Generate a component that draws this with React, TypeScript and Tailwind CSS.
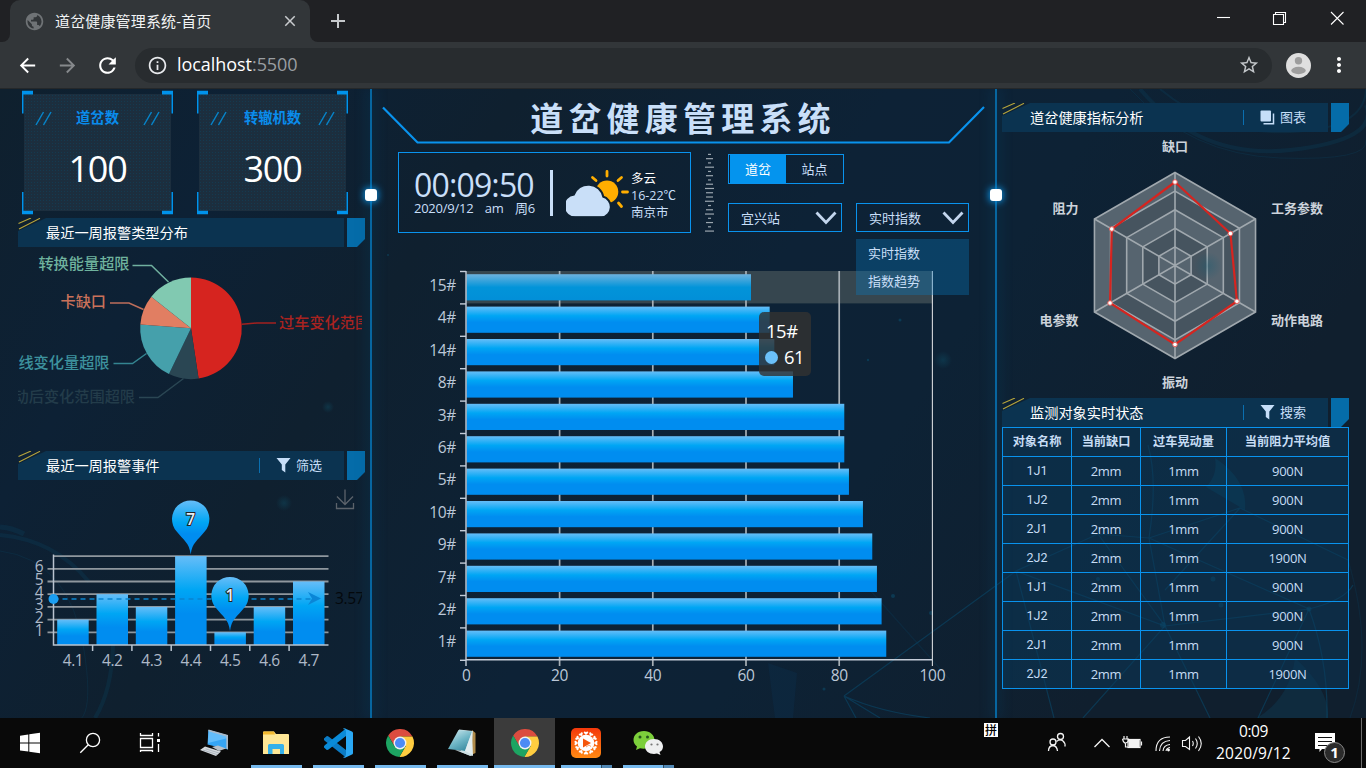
import React from "react";
import {
  MdAdd,
  MdArrowBack,
  MdArrowForward,
  MdClose,
  MdInfoOutline,
  MdMoreVert,
  MdPublic,
  MdRefresh,
  MdStarBorder,
} from "react-icons/md";

const FONT = "font-['Open_Sans','Noto_Sans_CJK_SC',sans-serif]";

/* ---------- browser chrome ---------- */

function TabStrip() {
  return (
    <div className="flex h-[42px] shrink-0 bg-[#202124]">
      <div className="flex w-[10px] items-end bg-[#323639]">
        <div className="h-full w-full rounded-br-[8px] bg-[#202124]" />
      </div>
      <div className="flex w-[300px] items-center rounded-t-[10px] bg-[#323639] pl-[14px] pr-[11px]">
        <MdPublic className="size-[21px] shrink-0 text-[#6f7376]" />
        <span className="ml-[10px] flex-1 whitespace-nowrap text-[15px] tracking-[0.15px] text-[#f1f3f4]">道岔健康管理系统-首页</span>
        <MdClose className="size-[18px] text-[#c9cccf]" />
      </div>
      <div className="w-[10px] bg-[#323639]">
        <div className="h-full w-full rounded-bl-[8px] bg-[#202124]" />
      </div>
      <div className="flex w-[35px] items-center justify-center">
        <MdAdd className="size-[24px] text-[#c6c9cc]" />
      </div>
      <div className="flex-1" />
      <svg className="mr-[20px] h-[42px] w-[130px]" viewBox="1216 0 130 42" fill="none" stroke="#fff" strokeWidth="1.1">
        <path d="M1217 17.5H1230" />
        <path d="M1273.5 14.5H1283.5V24.500H1273.500ZM1275.500 14.500V12.500H1285.500V22.500H1283.500" />
        <path d="M1331 12L1343.500 24.500M1343.500 12L1331 24.500" />
      </svg>
    </div>
  );
}

function Toolbar() {
  return (
    <div className="flex h-[47px] shrink-0 items-center border-b border-[#25282a] bg-[#323639]">
      <div className="flex w-[135px] items-center pl-[16px] text-white">
        <MdArrowBack className="size-[23px]" />
        <MdArrowForward className="ml-[17px] size-[23px] text-[#86898c]" />
        <MdRefresh className="ml-[16px] size-[25px]" />
      </div>
      <div className="flex h-[35px] w-[1137px] items-center rounded-full bg-[#282c2f] pl-[12px] pr-[12px]">
        <MdInfoOutline className="size-[21px] text-[#e8eaed]" />
        <span className="mb-[2px] ml-[9px] flex-1 text-[18px] leading-[33px] tracking-[-0.050px] text-white">
          localhost<span className="text-[#9a9ea2]">:5500</span>
        </span>
        <MdStarBorder className="size-[22px] text-[#c3c7ca]" />
      </div>
      <svg className="ml-[14px] size-[25px]" viewBox="0 0 25 25">
        <circle cx="12.500" cy="12.500" r="12.500" fill="#dfdfdf" />
        <circle cx="12.500" cy="7.700" r="3.700" fill="#9e9e9e" />
        <ellipse cx="12.500" cy="17.500" rx="7.200" ry="3.700" fill="#9e9e9e" />
      </svg>
      <MdMoreVert className="ml-[16px] size-[24px] text-white" />
    </div>
  );
}

/* ---------- shared dashboard pieces ---------- */

function Backdrop() {
  return (
    <svg className="absolute inset-0 h-full w-full" viewBox="0 89 1366 629" fill="none">
      <defs>
        <linearGradient id="bg" x1="0" y1="0" x2="1" y2="0.300">
          <stop offset="0" stopColor="#0f202e" />
          <stop offset="0.180" stopColor="#0d2135" />
          <stop offset="0.350" stopColor="#0f202f" />
          <stop offset="0.600" stopColor="#0d2236" />
          <stop offset="0.750" stopColor="#0d2235" />
          <stop offset="1" stopColor="#101f2e" />
        </linearGradient>
        <radialGradient id="star">
          <stop offset="0" stopColor="#0f5a72" stopOpacity="0.350" />
          <stop offset="1" stopColor="#0f5a72" stopOpacity="0" />
        </radialGradient>
      </defs>
      <rect y="89" width="1366" height="629" fill="url(#bg)" />
      <g stroke="#0a4a6e" strokeOpacity="0.550" strokeWidth="1.200">
        <path d="M844 696L1016 571L1098 534L1149 538L1165 626L1016 571M1098 534L1165 626L1083 718M1016 571L1054 718M844 696L880 718M844 696Q880 712 930 718M844 696L856 718M1149 538L1240 508L1348 560M1149 538L1309 609L1165 626L1210 718M1309 609Q1345 600 1353 585M1309 609L1258 718M1309 609Q1328 660 1327 718M1240 508L1165 590M1148 445Q1158 480 1149 538" />
        <path d="M1348 560Q1375 650 1350 718M870 590L950 680" strokeOpacity="0.200" />
      </g>
      <g fill="#0b5e82" fillOpacity="0.400">
        <circle cx="1163" cy="625" r="3" />
        <circle cx="1213" cy="579" r="2.500" />
        <circle cx="1309" cy="609" r="2.500" />
        <circle cx="1221" cy="605" r="2.500" />
        <circle cx="1098" cy="579" r="2" />
        <circle cx="893" cy="596" r="2" />
        <circle cx="931" cy="613" r="2" />
        <circle cx="880" cy="646" r="1.500" />
        <circle cx="824" cy="689" r="1.500" />
        <circle cx="388" cy="255" r="1" />
        <circle cx="868" cy="360" r="1.200" />
        <circle cx="900" cy="320" r="1.500" />
      </g>
      <path d="M768 663L797 673L793 718H775Z" fill="#0b3050" fillOpacity="0.350" />
      <path d="M1215 458Q1248 480 1245 510L1206 487Q1218 475 1215 458Z" fill="#0a5070" fillOpacity="0.350" />
      <path d="M1295 658Q1330 690 1328 718H1257Q1290 698 1295 658Z" fill="#0a5070" fillOpacity="0.250" />
      <circle cx="943" cy="360" r="9" fill="url(#star)" />
      <circle cx="284" cy="503" r="8" fill="url(#star)" />
      <circle cx="328" cy="407" r="6" fill="url(#star)" />
      <g stroke="#0b4460" strokeOpacity="0.280">
        <path d="M0 527Q13 528 24 534" strokeWidth="5" />
        <path d="M0 535Q55 540 89 582M113 645Q112 690 95 718" strokeWidth="4" />
        <path d="M0 551Q70 560 84 650T60 718" strokeWidth="1" />
        <path d="M1140 89Q1200 160 1290 150T1366 105" strokeWidth="4" />
        <path d="M1160 89Q1215 135 1290 132T1366 89" strokeWidth="2" />
        <path d="M1130 89Q1190 155 1280 158T1366 140" strokeWidth="1" />
      </g>
    </svg>
  );
}

function PanelHeader({ title, action }: { title: string; action?: React.ReactNode }) {
  return (
    <div className="relative flex h-[29px] w-[347px] shrink-0 justify-between">
      <div className="flex w-[326px] items-center bg-[#0b3350] pl-[28px] [clip-path:polygon(28px_0,100%_0,100%_100%,0_100%,0_13px)]">
        <h2 className="flex-1 text-[14.2px] leading-[28px] text-white">{title}</h2>
        {action && (
          <div className="flex h-[15px] w-[85px] items-center border-l border-[#0a6fb0] pl-[16px] text-[13px] text-[#c6def8]">{action}</div>
        )}
      </div>
      <div className="w-[18px] bg-[#056ca9] [clip-path:polygon(0_0,100%_0,100%_21px,10px_100%,0_100%)]" />
      <svg className="absolute left-0 top-0 h-[12px] w-[24px]" viewBox="0 0 24 12" stroke="#b7a53c" strokeWidth="1.100">
        <path d="M0.500 5.500L13 0M1 11L22 0.300" />
      </svg>
    </div>
  );
}

function Funnel() {
  return (
    <svg className="mr-[5px] h-[15px] w-[15px]" viewBox="0 0 15 15" fill="#c6def8">
      <path d="M0.500 0H14.500L9.300 6.500V14.500L5.800 12V6.500Z" />
    </svg>
  );
}

function CopyIcon() {
  return (
    <svg className="mr-[5px] h-[15px] w-[15px]" viewBox="0 0 15 15">
      <rect x="0.500" y="0.500" width="10.500" height="11" rx="1" fill="#c6def8" />
      <path d="M13.500 3.500V13.800H3.500" fill="none" stroke="#c6def8" strokeWidth="1.500" />
    </svg>
  );
}

function Divider() {
  return (
    <div className="relative w-[2px] shrink-0 bg-[#0766a0] shadow-[0_0_14px_2px_rgba(8,90,140,0.300)]">
      <div className="absolute -left-[5px] top-[100px] size-[12px] rounded-[3px] bg-white shadow-[0_0_7px_1px_#0a8fe0]" />
    </div>
  );
}

/* ---------- left column ---------- */

function StatCard({ label, value }: { label: string; value: string }) {
  return (
    <div className="relative h-[125px] w-[151px] px-[2px] py-[4px]">
      <div className="flex h-[117px] flex-col items-center bg-[#1c2e3e] bg-[radial-gradient(#143a50_0.8px,transparent_1px)] bg-[size:3px_3px]">
        <div className="mt-[14px] flex w-[125px] items-center justify-between">
          <Slashes />
          <span className="text-[14.300px] font-bold leading-[20px] text-[#0a8cec]">{label}</span>
          <Slashes />
        </div>
        <span className="mt-[18px] text-[36px] leading-[46px] tracking-[-1.300px] text-white">{value}</span>
      </div>
      <svg className="absolute inset-0 h-full w-full" viewBox="0 0 151 125" fill="#0093ec">
        <path d="M0 0.800H11V4.500H1.500V23.500H0ZM151 0.800H140V4.500H149.500V23.500H151ZM0 124.300H11V120.800H1.500V102H0ZM151 124.300H140V120.800H149.500V102H151Z" />
      </svg>
    </div>
  );
}

function Slashes() {
  return (
    <svg className="h-[15px] w-[17px]" viewBox="0 0 17 15" stroke="#0783c8" strokeWidth="1.500">
      <path d="M1 14L8.500 1M8.500 14L16 1" />
    </svg>
  );
}

const pie = [
  { v: 10, c: "#d6241f" },
  { v: 2, c: "#2a4653" },
  { v: 4, c: "#45a0ab" },
  { v: 2, c: "#e17e62" },
  { v: 3, c: "#81c9b1" },
];

function PieChart() {
  const total = pie.reduce((s, p) => s + p.v, 0);
  const at = (a: number) => `${191 + 50.800 * Math.sin(a)} ${328.300 - 50.800 * Math.cos(a)}`;
  let start = 0;
  return (
    <svg className="h-[204px] w-[344px] shrink-0" viewBox="18 247 344 204" fontSize="15.200" fontWeight="500">
      {pie.map((p) => {
        const end = start + (p.v / total) * Math.PI * 2;
        const d = `M191 328.300L${at(start)}A50.800 50.800 0 0 1 ${at(end)}Z`;
        start = end;
        return <path key={d} d={d} fill={p.c} />;
      })}
      <g fill="none" strokeWidth="1.500">
        <path d="M242 324.300L257 323H276" stroke="#a3211f" />
        <path d="M183.500 378.500L158 397.500H139" stroke="#2a4653" />
        <path d="M146.500 353.500L132.500 363.500H113.500" stroke="#348591" />
        <path d="M143.500 309.500L129 303H110" stroke="#bd6e5b" />
        <path d="M168.500 282L151.500 265.500H132.500" stroke="#70b09f" />
      </g>
      <text x="279" y="327.600" fill="#a92320">过车变化范围超限</text>
      <text x="135" y="401.800" fill="#233c4a" textAnchor="end">启动后变化范围超限</text>
      <text x="109.500" y="367.500" fill="#3d929e" textAnchor="end">曲线变化量超限</text>
      <text x="106" y="307.300" fill="#c9715a" textAnchor="end">卡缺口</text>
      <text x="129.500" y="269" fill="#6fb39e" textAnchor="end">转换能量超限</text>
    </svg>
  );
}

const weekly = [2, 4, 3, 7, 1, 3, 5];

function Pin({ x, y, label }: { x: number; y: number; label: string }) {
  return (
    <g transform={`translate(${x} ${y})`}>
      <path d="M0 36C-1.500 24-7 22-14 13A18.700 18.700 0 1 1 14 13C7 22 1.500 24 0 36Z" fill="url(#pin)" />
      <text x="0" y="6" textAnchor="middle" fontSize="15.500" fontWeight="600" fill="#e8eef5" stroke="#222" strokeWidth="2" paintOrder="stroke">
        {label}
      </text>
    </g>
  );
}

function WeeklyChart() {
  return (
    <svg className="h-[225px] w-[344px] shrink-0" viewBox="18 480 344 225" fontSize="15.500" fontWeight="500">
      <defs>
        <linearGradient id="barY" x1="0" y1="0" x2="0" y2="1">
          <stop offset="0" stopColor="#66bdf8" />
          <stop offset="0.380" stopColor="#00a6f4" />
          <stop offset="0.650" stopColor="#008df0" />
        </linearGradient>
        <linearGradient id="pin" x1="0" y1="0" x2="0" y2="1">
          <stop offset="0" stopColor="#66bdf8" />
          <stop offset="0.400" stopColor="#00a6f4" />
          <stop offset="0.620" stopColor="#008df0" />
        </linearGradient>
      </defs>
      <g stroke="#8f979e" strokeWidth="1.800">
        {[1, 2, 3, 4, 5, 6, 7].map((n) => (
          <path key={n} d={`M${n === 7 ? 53 : 47.500} ${645 - n * 12.700}H328.500`} />
        ))}
      </g>
      {weekly.map((v, i) => (
        <rect key={i} x={57.200 + i * 39.300} y={645 - v * 12.700} width="31.500" height={v * 12.700} fill="url(#barY)" />
      ))}
      <g stroke="#b9c3d0" strokeWidth="1.500">
        <path d="M53.500 554.500V645H328.500" fill="none" />
        {[1, 2, 3, 4, 5, 6].map((n) => (
          <path key={n} d={`M${53.300 + n * 39.300} 645V651`} />
        ))}
      </g>
      <path d="M53.500 599H318" stroke="#0a84cf" strokeWidth="1.500" strokeDasharray="5 4" />
      <circle cx="53.500" cy="599" r="5" fill="#1b9ff2" />
      <path d="M321 598.500L308 592L312 598.500L308 605Z" fill="#0a86d6" />
      <text x="335" y="603.500" fill="#04080c" letterSpacing="-0.400">3.57</text>
      <g fill="#aeb9c8">
        {[1, 2, 3, 4, 5, 6].map((n) => (
          <text key={n} x="43.500" y={648.500 - n * 12.700} textAnchor="end">{n}</text>
        ))}
        {weekly.map((_, i) => (
          <text key={i} x={73 + i * 39.300} y="666" textAnchor="middle" letterSpacing="-0.400">{`4.${i + 1}`}</text>
        ))}
      </g>
      <Pin x={190.700} y={518.500} label="7" />
      <Pin x={230} y={595} label="1" />
      <path d="M345 489.500V504M337 496.500L345 504.500L353 496.500M336.500 503V508.500H353.500V503" fill="none" stroke="#5c636b" strokeWidth="1.300" />
    </svg>
  );
}

/* ---------- centre column ---------- */

function Weather() {
  return (
    <svg className="ml-[13px] h-[48px] w-[64px]" viewBox="566 169 64 48">
      <g stroke="#ffae00" strokeWidth="2.800" strokeLinecap="round">
        <path d="M607 171.500V176M592.500 177.500L596 180.500M618 180.500L621.500 177.500M622.500 192H627.500M618.500 203L621.500 206.500" />
      </g>
      <circle cx="607" cy="191.800" r="11.300" fill="#ffae00" />
      <path
        d="M576 216.500A10.500 10.500 0 0 1 574.500 195.500A14.500 14.500 0 0 1 602.500 197.500A9.700 9.700 0 0 1 601.500 216.500Z"
        fill="#c9dff8"
        stroke="#0f2131"
        strokeWidth="4"
        paintOrder="stroke"
      />
      <rect x="564" y="216.300" width="50" height="4" fill="#0f2131" />
    </svg>
  );
}

const ticks = [3, 7, 3, 9, 3, 7, 3, 7, 9, 7, 7, 9, 3, 7, 9, 3, 7, 3, 9];

function Ruler() {
  return (
    <svg className="ml-[14px] h-[81px] w-[9px]" viewBox="0 0 9 81" fill="#9ba6af">
      {ticks.map((w, i) => (
        <rect key={i} x={(9 - w) / 2} y={1.800 + i * 4.260} width={w} height="1.200" />
      ))}
    </svg>
  );
}

function Select({ label, width, children }: { label: string; width: string; children?: React.ReactNode }) {
  return (
    <div className={`relative flex h-[29px] items-center justify-between border border-[#0993ee] pl-[12px] pr-[4px] text-[13px] text-[#c9dff8] ${width}`}>
      <span className="pt-px leading-[20px]">{label}</span>
      <svg className="h-[14px] w-[22px]" viewBox="0 0 22 14" fill="none" stroke="#c3d6ee" strokeWidth="2.800">
        <path d="M1.500 1.500L11 11.500L20.500 1.500" />
      </svg>
      {children}
    </div>
  );
}

const ranking: [string, number][] = [
  ["15#", 61],
  ["4#", 65],
  ["14#", 66],
  ["8#", 70],
  ["3#", 81],
  ["6#", 81],
  ["5#", 82],
  ["10#", 85],
  ["9#", 87],
  ["7#", 88],
  ["2#", 89],
  ["1#", 90],
];

function RankingChart() {
  const row = 32.400;
  return (
    <div className="relative h-[485px]">
      <svg className="h-[485px] w-[623px]" viewBox="372 233 623 485" fontSize="15.500" fontWeight="500">
        <defs>
          <linearGradient id="barX" x1="0" y1="0" x2="0" y2="1">
            <stop offset="0" stopColor="#66bdf8" />
            <stop offset="0.350" stopColor="#00a6f4" />
            <stop offset="0.600" stopColor="#008df0" />
          </linearGradient>
          <linearGradient id="barHover" x1="0" y1="0" x2="0" y2="1">
            <stop offset="0" stopColor="#6db2de" />
            <stop offset="0.500" stopColor="#0294d9" />
            <stop offset="1" stopColor="#028fd8" />
          </linearGradient>
        </defs>
        <rect x="466" y="271" width="466.500" height="32.400" fill="#36464f" />
        {[20, 40, 60, 80, 100].map((v) => (
          <path key={v} d={`M${466.400 + v * 4.660} 271V666`} stroke={v === 100 ? "#d5d8dc" : "#a7afb5"} strokeWidth={v === 100 ? 1.100 : 1.700} />
        ))}
        {ranking.map(([name, v], i) => (
          <g key={name}>
            <rect x="466.500" y={274.200 + i * row} width={v * 4.664} height="26.200" fill={i === 0 ? "url(#barHover)" : "url(#barX)"} />
            <text x="456" y={291 + i * row} textAnchor="end" fill="#bcc8d8" letterSpacing="-0.300">{name}</text>
          </g>
        ))}
        <g stroke="#c4ccd8" strokeWidth="1.400">
          <path d="M466 271V666M466 659.800H932.500" />
          {Array.from({ length: 13 }, (_, i) => (
            <path key={i} d={`M460 ${271.500 + i * row}H466`} />
          ))}
        </g>
        <g fill="#bcc8d8">
          {[0, 20, 40, 60, 80, 100].map((v) => (
            <text key={v} x={466.400 + v * 4.660} y="681.300" textAnchor="middle" letterSpacing="-0.300">{v}</text>
          ))}
        </g>
      </svg>
      <div className="absolute left-[387px] top-[79px] flex h-[64px] w-[52px] flex-col rounded-[5px] bg-[#323232]/[0.820] pl-[7px] pt-[6px] text-[18.400px] leading-[26px] tracking-[-0.400px] text-white">
        <span>15#</span>
        <span className="flex items-center">
          <i className="-ml-px mr-[6px] size-[13px] rounded-full bg-[#6bc0f9]" />61
        </span>
      </div>
    </div>
  );
}

function Center() {
  return (
    <main className="flex w-[623px] shrink-0 flex-col">
      <header className="relative flex h-[63px] justify-center">
        <svg className="absolute inset-0 h-full w-full" viewBox="372 89 623 63" fill="none" stroke="#0993ee" strokeWidth="2.200">
          <path d="M383 107.500L417.500 142.500H949L984 107" />
        </svg>
        <h1 className="-ml-px text-[33px] font-bold leading-[60px] tracking-[5.200px] text-[#c9dff8]">道岔健康管理系统</h1>
      </header>
      <section className="relative z-10 flex h-[81px] pl-[26px]">
        <div className="flex h-[81px] w-[293px] items-center border border-[#0993ee] text-[#c9dff8]">
          <div className="ml-[15px] w-[122px]">
            <div className="text-[32px] leading-[32px] tracking-[-0.850px]">00:09:50</div>
            <div className="-mt-px flex w-[121px] justify-between text-[13px] leading-[16px] tracking-[-0.250px]">
              <span>2020/9/12</span>
              <span>am</span>
              <span>周6</span>
            </div>
          </div>
          <div className="ml-[14px] h-[46px] w-[3px] bg-[#c9dff8]" />
          <Weather />
          <div className="ml-px mt-[6px] whitespace-nowrap text-[12.500px] leading-[17px]">
            <div className="text-white">多云</div>
            <div>16-22℃</div>
            <div>南京市</div>
          </div>
        </div>
        <Ruler />
        <div className="ml-[14px] flex flex-col pt-[2px]">
          <div className="flex h-[30px] w-[116px] border border-[#0993ee] pl-px text-[13px] leading-[28px]">
            <span className="w-[56px] bg-[#0494ee] text-center text-white">道岔</span>
            <span className="flex-1 text-center text-[#c9dff8]">站点</span>
          </div>
          <div className="mt-[19px] flex gap-[14px]">
            <Select label="宜兴站" width="w-[114px]" />
            <Select label="实时指数" width="w-[113px]">
              <ul className="absolute -left-px top-[35px] h-[56px] w-[113px] bg-[#087cc0]/[0.340] pl-[12px] leading-[28px]">
                <li>实时指数</li>
                <li>指数趋势</li>
              </ul>
            </Select>
          </div>
        </div>
      </section>
      <RankingChart />
    </main>
  );
}

/* ---------- right column ---------- */

const CX = 1175;
const CY = 265.500;
const ring = (radii: number[]) =>
  radii
    .map((r, i) => {
      const a = (i * Math.PI) / 3;
      return `${CX + r * Math.sin(a)},${CY - r * Math.cos(a)}`;
    })
    .join(" ");
const health = [83.500, 64, 71.500, 79, 75, 73];

function Radar() {
  return (
    <svg className="h-[266px] w-[369px] shrink-0" viewBox="997 132 369 266" fontSize="13" fontWeight="600" fill="#ccd3db">
      {[5, 4, 3, 2, 1].map((n) => (
        <polygon
          key={n}
          points={ring(Array(6).fill(n * 18.600))}
          fill={n % 2 ? "#56646f" : "#46545f"}
          stroke="#a0a8ae"
          strokeWidth="1.600"
        />
      ))}
      <circle cx="1208" cy="266" r="14" fill="url(#star)" />
      <path d="M1175 172.500V358.500M1094.500 219L1255.500 312M1255.500 219L1094.500 312" stroke="#a0a8ae" strokeWidth="1.600" />
      <polygon points={ring(health)} fill="none" stroke="#d6241f" strokeWidth="2.200" />
      {ring(health)
        .split(" ")
        .map((p) => {
          const [x, y] = p.split(",");
          return <circle key={p} cx={x} cy={y} r="2.300" fill="#fff" stroke="#e8605c" strokeWidth="1" />;
        })}
      <text x="1175" y="150.500" textAnchor="middle">缺口</text>
      <text x="1175" y="386.500" textAnchor="middle">振动</text>
      <text x="1271" y="213">工务参数</text>
      <text x="1271" y="324.500">动作电路</text>
      <text x="1078.500" y="213" textAnchor="end">阻力</text>
      <text x="1078.500" y="324.500" textAnchor="end">电参数</text>
    </svg>
  );
}

const objects = ["1J1", "1J2", "2J1", "2J2", "1J1", "1J2", "2J1", "2J2"];

function StatusTable() {
  return (
    <table className="h-[262px] w-[347px] table-fixed border-collapse bg-[#0a3a5c]/50 text-center text-[13px] leading-[20px] text-[#c6dcf4]">
      <colgroup>
        <col className="w-[69px]" />
        <col className="w-[69px]" />
        <col className="w-[86px]" />
        <col className="w-[122px]" />
      </colgroup>
      <thead>
        <tr className="h-[29px] text-[12.200px]">
          {["对象名称", "当前缺口", "过车晃动量", "当前阻力平均值"].map((h) => (
            <th key={h} className="whitespace-nowrap border border-[#0993ee] p-0 font-bold">{h}</th>
          ))}
        </tr>
      </thead>
      <tbody>
        {objects.map((name, i) => (
          <tr key={i} className="h-[29px]">
            <td className="border border-[#0993ee] p-0 font-[Roboto,sans-serif] text-[12.500px]">{name}</td>
            {["2mm", "1mm", name === "2J2" ? "1900N" : "900N"].map((c) => (
              <td key={c} className="border border-[#0993ee] p-0 tracking-[-0.300px]">{c}</td>
            ))}
          </tr>
        ))}
      </tbody>
    </table>
  );
}

function Dashboard() {
  return (
    <div className="relative h-[629px] shrink-0 overflow-hidden bg-[#0f2131]">
      <Backdrop />
      <div className="relative flex h-full">
        <aside className="flex w-[370px] shrink-0 flex-col pl-[18px]">
          <div className="flex gap-[24px] pb-[3px] pl-[4px] pt-px">
            <StatCard label="道岔数" value="100" />
            <StatCard label="转辙机数" value="300" />
          </div>
          <PanelHeader title="最近一周报警类型分布" />
          <PieChart />
          <PanelHeader title="最近一周报警事件" action={<><Funnel />筛选</>} />
          <WeeklyChart />
        </aside>
        <Divider />
        <Center />
        <Divider />
        <aside className="flex w-[369px] shrink-0 flex-col">
          <div className="pl-[5px] pt-[14px]">
            <PanelHeader title="道岔健康指标分析" action={<><CopyIcon />图表</>} />
          </div>
          <Radar />
          <div className="pl-[5px]">
            <PanelHeader title="监测对象实时状态" action={<><Funnel />搜索</>} />
            <StatusTable />
          </div>
        </aside>
      </div>
    </div>
  );
}

/* ---------- task bar ---------- */

function ChromeLogo() {
  return (
    <svg className="size-[28px]" viewBox="0 0 48 48">
      <path d="M3.800 11.030A24 24 0 0 1 45.330 13H24L14.470 29.500Z" fill="#db4c3f" />
      <path d="M45.330 13A24 24 0 0 1 22.860 47.970L33.530 29.500L24 13Z" fill="#ffcd40" />
      <path d="M22.860 47.970A24 24 0 0 1 3.800 11.030L14.470 29.500H33.530Z" fill="#1da462" />
      <circle cx="24" cy="24" r="11" fill="#f2f2f2" />
      <circle cx="24" cy="24" r="8.700" fill="#4c8bf5" />
    </svg>
  );
}

function ComputerIcon() {
  return (
    <svg className="size-[30px]" viewBox="199 728 30 30">
      <path d="M208.500 730L228 735.500V749.500L207.500 744.500Z" fill="#35a5f5" />
      <path d="M208.500 730L228 735.500V738L208 743Z" fill="#63bdfb" />
      <path d="M208.500 729.500L228 735V749.500L226.300 748.500V736.500L208.500 731.300Z" fill="#a9b9c8" />
      <path d="M212 747L218 745.500L226 748.500L219 751Z" fill="#b6c0ca" />
      <path d="M200 750L205 746.500L221 751.500L216 756Z" fill="#d5dade" />
      <path d="M203 750L217 754.500M205.500 748.800L219 753" stroke="#9aa5b0" strokeWidth="0.700" />
    </svg>
  );
}

function FolderIcon() {
  return (
    <svg className="size-[28px]" viewBox="0 0 28 28">
      <path d="M1 3.500Q1 2.500 2 2.500H12L14 5H26Q27 5 27 6V25H1Z" fill="#ffe795" />
      <path d="M1 3.500Q1 2.500 2 2.500H12L13 5.500H1Z" fill="#f3b92f" />
      <path d="M6 25V16.500Q6 15 7.500 15H20.500Q22 15 22 16.500V25H18V20H10.500V25Z" fill="#36b1ea" />
    </svg>
  );
}

function CodeIcon() {
  return (
    <svg className="size-[30px]" viewBox="0 0 30 30">
      <path d="M1 10.500L3.500 8.300Q4.500 7.800 5.500 8.500L23 22V29.500L2 13Q0.500 12 1 10.500Z" fill="#0b7bc4" />
      <path d="M1 19.500L3.500 21.700Q4.500 22.200 5.500 21.500L23 8V0.500L2 17Q0.500 18 1 19.500Z" fill="#0a8bd8" />
      <path d="M22 0.500L29 3.500Q30 4 30 5V25Q30 26 29 26.500L22 29.700Q20.500 30 20 29Q23 29 23 26V4Q23 1 20 1Q20.500 0 22 0.500Z" fill="#2aa8f4" />
    </svg>
  );
}

function NotebookIcon() {
  return (
    <svg className="size-[30px]" viewBox="0 0 30 30">
      <defs>
        <linearGradient id="note" x1="0" y1="0" x2="0.600" y2="1">
          <stop offset="0" stopColor="#d8eef2" />
          <stop offset="0.600" stopColor="#6fb6c6" />
          <stop offset="1" stopColor="#3f8fa4" />
        </linearGradient>
      </defs>
      <path d="M25 2L28.500 5V25L24 27Z" fill="#b08b4a" />
      <path d="M12 1.500L26 3L23.500 28L14 24Z" fill="#c8dde2" />
      <path d="M11.500 2L25 3.500L18 23L1 21Z" fill="url(#note)" />
      <path d="M18 23L25 4L26 28Z" fill="#e2edf0" />
      <path d="M8 22L24 28L26 27L18 23Z" fill="#cfe0e4" />
    </svg>
  );
}

function SunflowerIcon() {
  return (
    <svg className="size-[30px]" viewBox="0 0 30 30">
      <defs>
        <linearGradient id="sun" x1="0" y1="0" x2="0" y2="1">
          <stop offset="0" stopColor="#f4380b" />
          <stop offset="1" stopColor="#ff8a13" />
        </linearGradient>
      </defs>
      <rect width="30" height="30" rx="5" fill="url(#sun)" />
      {Array.from({ length: 12 }, (_, i) => (
        <path key={i} d="M15 7L12.700 4.800Q13 2.500 15 4Q17 2.500 17.300 4.800Z" fill="#fff" transform={`rotate(${i * 30} 15 15)`} />
      ))}
      <circle cx="15" cy="15" r="8.300" fill="#fff" />
      <path d="M12 10.500L20 15L12 19.500Z" fill="#f5560b" />
      <path d="M15 19L18 17L20 18.500" stroke="#f9a06a" fill="none" />
    </svg>
  );
}

function WeChatIcon() {
  return (
    <svg className="size-[32px]" viewBox="0 0 32 32">
      <path d="M12 4C5.500 4 1.500 8 1.500 13C1.500 16 3 18 5 19.500L4 23L8 21.300C14 23 22 20 22.500 13C22.500 8 18 4 12 4Z" fill="#7ccf3b" />
      <path d="M22 12C16.500 12 13 15.500 13 19.500C13 24 17 27 22 27L25 26.500L28.500 28L27.500 25C30 24 31 21.500 31 19.500C31 15.500 27.500 12 22 12Z" fill="#eeeff0" />
      <circle cx="8" cy="10" r="1.500" fill="#24551c" />
      <circle cx="15.500" cy="10" r="1.500" fill="#24551c" />
      <circle cx="19.500" cy="17.500" r="1.100" fill="#777" />
      <circle cx="25.500" cy="17.500" r="1.100" fill="#777" />
    </svg>
  );
}

function TaskItem({ children, running, active, stacked }: { children: React.ReactNode; running?: boolean; active?: boolean; stacked?: boolean }) {
  return (
    <div className={`flex flex-col items-center ${active ? "ml-px w-[61px] bg-[#3b3b3b]" : "w-[62px]"}`}>
      <div className="flex h-[47px] items-center pt-[3px]">{children}</div>
      <div className={`flex h-[3px] ${active ? "w-full" : "w-[51px]"}`}>
        {running && <i className="h-full flex-1 bg-[#76b9ed]" />}
        {stacked && <i className="h-full w-[11px] border-l border-[#2e4a60] bg-[#5187b3]" />}
      </div>
    </div>
  );
}

function Taskbar() {
  return (
    <div className="flex h-[50px] shrink-0 bg-[#090909]">
      <svg className="h-[50px] w-[183px]" viewBox="0 718 183 50" fill="none">
        <path d="M20 735.700L28.300 734.500V742.500H20ZM29.300 734.300L40 732.800V742.500H29.300ZM20 743.500H28.300V751.600L20 750.400ZM29.300 743.500H40V753.200L29.300 751.800Z" fill="#fff" />
        <g stroke="#fff" strokeWidth="1.300">
          <circle cx="93" cy="740" r="6.600" />
          <path d="M88.300 744.700L80.300 752.700" />
          <path d="M140.500 738.500H152.500V747.500H140.500ZM140.500 733V735.500H152.500V733M140.500 752V750.500H152.500V752M158.500 733V736.500M158.500 744V752" />
        </g>
        <rect x="157" y="739" width="3" height="3" fill="#fff" />
      </svg>
      <TaskItem><ComputerIcon /></TaskItem>
      <TaskItem running><FolderIcon /></TaskItem>
      <TaskItem running><CodeIcon /></TaskItem>
      <TaskItem running><ChromeLogo /></TaskItem>
      <TaskItem running><NotebookIcon /></TaskItem>
      <TaskItem running active><ChromeLogo /></TaskItem>
      <TaskItem running stacked><SunflowerIcon /></TaskItem>
      <TaskItem running stacked><WeChatIcon /></TaskItem>
      <div className="flex-1" />
      <svg className="mr-[49px] mt-[5px] size-[14px]" viewBox="0 0 14 14">
        <rect width="14" height="14" fill="#fff" />
        <text x="7" y="11.500" textAnchor="middle" fontSize="12" fontWeight="500">拼</text>
      </svg>
      <svg className="h-[50px] w-[157px]" viewBox="1047 718 157 50" fill="none" stroke="#f4f4f4" strokeWidth="1.300">
        <circle cx="1060.500" cy="736.500" r="3" />
        <circle cx="1053" cy="742" r="3" />
        <path d="M1048.500 751Q1048.500 746 1053 745.500Q1057 746 1057.500 751M1056.500 741.500Q1060 738.500 1063 741Q1065.500 743 1065 746.500" />
        <path d="M1094.500 747L1102 739.500L1109.500 747" />
        <rect x="1128" y="739.500" width="12" height="8" strokeWidth="1.200" />
        <path d="M1141.500 741.500V745.500M1124 736V739M1127 736V739M1122.500 739H1128.500V741Q1127 743 1125.500 743Q1123.500 743 1122.500 739M1125.500 743V747H1128" strokeWidth="1.200" />
        <rect x="1128.500" y="740" width="11" height="7" fill="#f4f4f4" stroke="none" />
        <path d="M1156 751Q1156 737 1170 737M1159.500 751Q1160 741 1170 740.500M1163 751Q1163.500 745 1170 744.500M1166 751Q1166.500 748 1170 747.500" strokeWidth="1.100" />
        <circle cx="1168.500" cy="750" r="1.400" fill="#fff" stroke="none" />
        <path d="M1182.500 740.500H1185.500L1189.500 737V749.500L1185.500 746.500H1182.500ZM1192.500 741Q1194 743.500 1192.500 746M1195.500 738.500Q1199 743.500 1195.500 748.500M1198.500 736.500Q1204 743.500 1198.500 751" strokeWidth="1.100" />
      </svg>
      <div className="flex w-[99px] flex-col items-center pt-[2px] text-[15.500px] leading-[22px] tracking-[0.150px] text-white">
        <span className="tracking-[-0.400px]">0:09</span>
        <span>2020/9/12</span>
      </div>
      <svg className="h-[50px] w-[58px]" viewBox="1303 718 58 50">
        <path d="M1315 733H1335V749H1322L1319.500 752V749H1315Z" fill="#fff" />
        <path d="M1318 737.500H1332M1318 741.500H1332M1318 745.500H1328" stroke="#111" strokeWidth="1.200" />
        <circle cx="1334.500" cy="752.500" r="10" fill="#2b2b2b" stroke="#8a8a8a" />
        <text x="1334.500" y="757.500" textAnchor="middle" fontSize="15" fontWeight="700" fill="#fff">1</text>
      </svg>
      <div className="w-[5px] border-l border-[#6c6c6c]" />
    </div>
  );
}

export default function App() {
  return (
    <div className={`flex h-[768px] w-[1366px] flex-col overflow-hidden bg-black ${FONT}`}>
      <TabStrip />
      <Toolbar />
      <Dashboard />
      <Taskbar />
    </div>
  );
}
